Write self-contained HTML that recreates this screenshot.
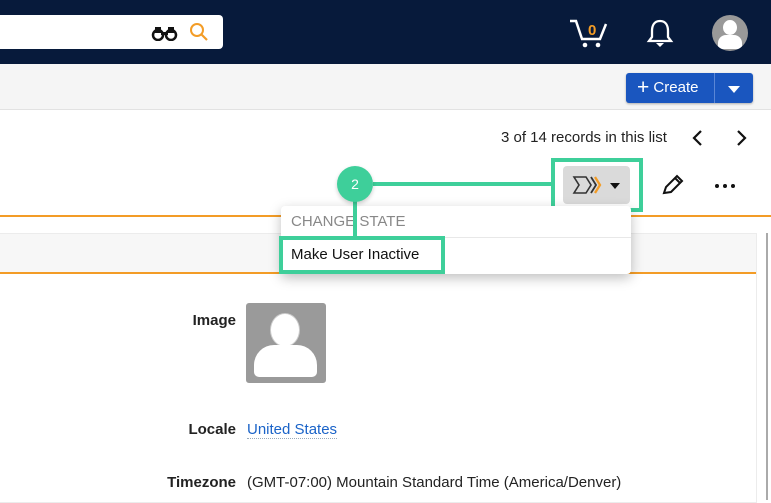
<!DOCTYPE html>
<html><head><meta charset="utf-8"><style>
*{margin:0;padding:0;box-sizing:border-box}
body{width:771px;height:500px;overflow:hidden;position:relative;background:#fff;font-family:"Liberation Sans",sans-serif;color:#222}
.a{position:absolute}
</style></head><body>
<div class="a" style="left:0;top:0;width:771px;height:64px;background:#071a3b"></div>
<div class="a" style="left:-6px;top:15px;width:229px;height:34px;background:#fff;border-radius:4px"></div>
<svg class="a" style="left:151px;top:25px" width="28" height="16" viewBox="0 0 28 16"><circle cx="7" cy="10" r="5" fill="none" stroke="#111" stroke-width="2.5"/><circle cx="20" cy="10" r="5" fill="none" stroke="#111" stroke-width="2.5"/><rect x="4" y="2" width="6" height="6" fill="#111"/><rect x="17" y="2" width="6" height="6" fill="#111"/><rect x="10" y="7" width="7" height="3" fill="#111"/></svg>
<svg class="a" style="left:188px;top:21px" width="22" height="22" viewBox="0 0 22 22"><circle cx="9" cy="9" r="6" fill="none" stroke="#f39c26" stroke-width="2"/><path d="M13 13 L19 19" stroke="#f39c26" stroke-width="2.2"/></svg>
<svg class="a" style="left:569px;top:18px" width="42" height="30" viewBox="0 0 42 30"><path d="M1 3 H7 L13 21 H31 L37 6" fill="none" stroke="#fff" stroke-width="2.5"/><circle cx="16" cy="27" r="2.3" fill="#fff"/><circle cx="29" cy="27" r="2.3" fill="#fff"/><text x="19" y="17" font-size="15" font-weight="bold" fill="#f39c26" font-family="Liberation Sans">0</text></svg>
<svg class="a" style="left:646px;top:18px" width="28" height="30" viewBox="0 0 28 30"><path d="M14 3 C8 3 6 8 6 13 V19 L3 23 H25 L22 19 V13 C22 8 20 3 14 3Z" fill="none" stroke="#fff" stroke-width="2.3"/><path d="M10 25 H18 L14 29Z" fill="#fff"/></svg>
<div class="a" style="left:712px;top:15px;width:36px;height:36px;border-radius:50%;background:#999;overflow:hidden"><div class="a" style="left:11px;top:5px;width:14px;height:15px;border-radius:50%;background:#fff"></div><div class="a" style="left:6px;top:20px;width:24px;height:14px;border-radius:8px 8px 2px 2px;background:#fff"></div></div>
<div class="a" style="left:0;top:64px;width:771px;height:46px;background:#f5f5f5;border-bottom:1px solid #e2e2e2"></div>
<div class="a" style="left:626px;top:73px;width:127px;height:30px;background:#1a56bf;border-radius:3px;box-shadow:0 1px 2px rgba(0,0,0,.3)"></div>
<div class="a" style="left:714px;top:73px;width:1px;height:30px;background:#5a86d6"></div>
<div class="a" style="left:637px;top:78px;color:#fff;font-size:15px;line-height:20px"><span style="font-size:21px;vertical-align:-2px">+</span> Create</div>
<div class="a" style="left:728px;top:86px;border-left:6px solid transparent;border-right:6px solid transparent;border-top:7px solid #fff"></div>
<div class="a" style="left:501px;top:129px;font-size:15px">3 of 14 records in this list</div>
<svg class="a" style="left:690px;top:129px" width="60" height="18" viewBox="0 0 60 18"><path d="M11 2 L4 9 L11 16" fill="none" stroke="#111" stroke-width="2.2"/><path d="M48 2 L55 9 L48 16" fill="none" stroke="#111" stroke-width="2.2"/></svg>
<div class="a" style="left:563px;top:166px;width:67px;height:38px;background:#dadada;border-radius:4px"></div>
<svg class="a" style="left:572px;top:175px" width="30" height="20" viewBox="0 0 30 20"><path d="M2 2 H14 L19 10 L14 18 H2 L7 10Z" fill="none" stroke="#333" stroke-width="1.6"/><path d="M19 2 L24 10 L19 18" fill="none" stroke="#333" stroke-width="1.8"/><path d="M23 2 L28 10 L23 18" fill="none" stroke="#f39c26" stroke-width="2.3"/></svg>
<div class="a" style="left:610px;top:183px;border-left:5px solid transparent;border-right:5px solid transparent;border-top:6px solid #111"></div>
<div class="a" style="left:551px;top:158px;width:92px;height:54px;border:4px solid #3ecf9a"></div>
<svg class="a" style="left:660px;top:173px" width="26" height="24" viewBox="0 0 26 24"><path d="M4 20 L6 14 L17 3 L22 8 L11 19Z M15 5 L20 10" fill="none" stroke="#111" stroke-width="2"/></svg>
<div class="a" style="left:715px;top:184px;width:4px;height:4px;border-radius:50%;background:#111;box-shadow:8px 0 #111,16px 0 #111"></div>
<div class="a" style="left:0;top:215px;width:771px;height:2px;background:#f39c26"></div>
<div class="a" style="left:0;top:233px;width:757px;height:270px;border:1px solid #ececec;border-left:none;background:#fff"></div>
<div class="a" style="left:0;top:234px;width:756px;height:40px;background:#f7f7f7;border-bottom:2px solid #f39c26"></div>
<div class="a" style="left:766px;top:233px;width:2px;height:267px;background:#aaa"></div>
<div class="a" style="left:281px;top:206px;width:350px;height:68px;background:#fff;border-radius:4px;box-shadow:0 4px 12px rgba(0,0,0,.25)"></div>
<div class="a" style="left:281px;top:237px;width:350px;height:1px;background:#e8e8e8"></div>
<div class="a" style="left:291px;top:213px;font-size:15px;color:#888">CHANGE STATE</div>
<div class="a" style="left:291px;top:246px;font-size:15px;color:#111">Make User Inactive</div>
<div class="a" style="left:279px;top:236px;width:166px;height:38px;border:4px solid #3ecf9a"></div>
<div class="a" style="left:373px;top:182px;width:180px;height:4px;background:#3ecf9a"></div>
<div class="a" style="left:353px;top:190px;width:4px;height:48px;background:#3ecf9a"></div>
<div class="a" style="left:337px;top:166px;width:36px;height:36px;border-radius:50%;background:#3ecf9a;color:#fff;font-size:14px;text-align:center;line-height:36px;box-shadow:0 2px 4px rgba(0,0,0,.2)">2</div>
<div class="a" style="left:120px;top:312px;width:116px;text-align:right;font-size:15px;font-weight:bold">Image</div>
<div class="a" style="left:246px;top:303px;width:80px;height:80px;background:#9a9a9a;border-radius:3px;overflow:hidden"><div class="a" style="left:24px;top:10px;width:30px;height:34px;border-radius:50%;background:#fff;border:1px solid #ccc"></div><div class="a" style="left:8px;top:42px;width:63px;height:32px;border-radius:20px 20px 5px 5px;background:#fff"></div></div>
<div class="a" style="left:120px;top:421px;width:116px;text-align:right;font-size:15px;font-weight:bold">Locale</div>
<div class="a" style="left:247px;top:421px;font-size:15px;color:#1a63c8;border-bottom:1px dotted #9ab">United States</div>
<div class="a" style="left:100px;top:474px;width:136px;text-align:right;font-size:15px;font-weight:bold">Timezone</div>
<div class="a" style="left:247px;top:474px;font-size:15px">(GMT-07:00) Mountain Standard Time (America/Denver)</div>
</body></html>
